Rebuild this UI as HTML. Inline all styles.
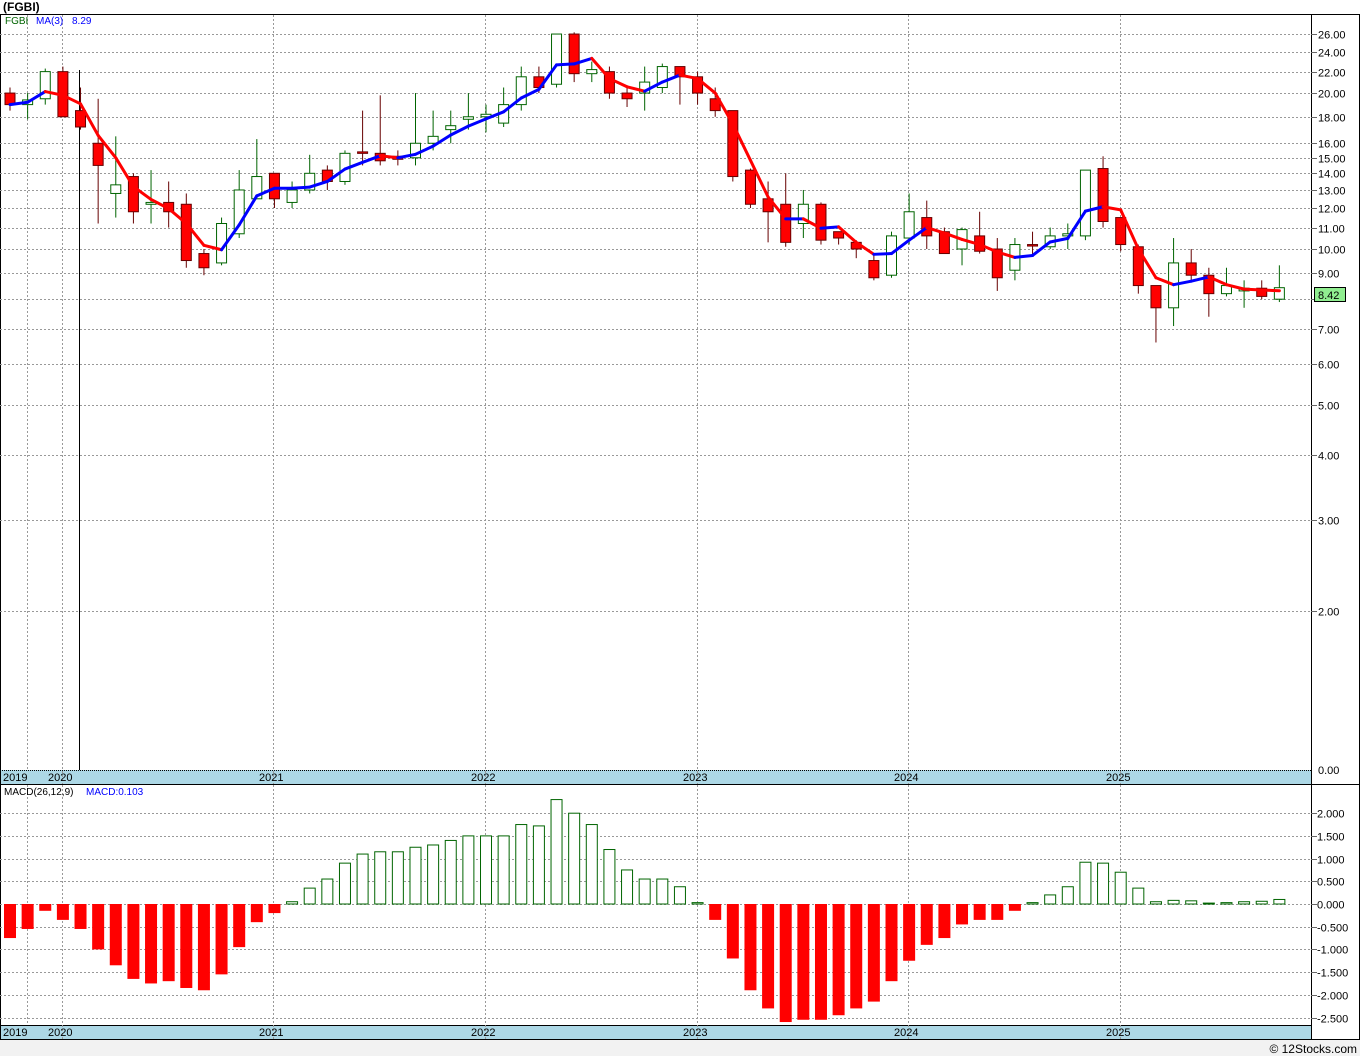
<!DOCTYPE html>
<html><head><meta charset="utf-8"><style>
body{margin:0;background:#fff;width:1360px;height:1056px;overflow:hidden;font-family:"Liberation Sans",sans-serif}
svg text{font-family:"Liberation Sans",sans-serif}
</style></head><body>
<svg id="s" width="1360" height="1056" xmlns="http://www.w3.org/2000/svg"></svg>
<script>
const D=[[20,20.5,18.5,19],[19,20,17.8,19.4],[19.5,22.3,19,22],[22,22.5,18,18],[18.5,20.5,17,17.2],[16,19.5,11.2,14.5],[12.8,16.5,11.5,13.3],[13.8,14,11.2,11.8],[12.2,14.2,11.2,12.3],[12.3,13.5,11,11.8],[12.2,12.8,9.2,9.5],[9.8,10,8.9,9.2],[9.4,11.5,9.3,11.2],[10.7,14.2,10.5,13],[12.5,16.3,12.5,13.8],[14,14,12,12.5],[12.3,13.5,12,13],[13,15.2,12.8,14],[14.2,14.5,13,13.5],[13.5,15.5,13.3,15.3],[15.4,18.5,14.5,15.3],[15.3,19.8,14.5,14.8],[15.1,15.5,14.5,14.9],[15,20,14.5,16],[16,18.5,15.5,16.5],[17,18.5,16,17.3],[17.8,20,17,18],[18,19,16.8,18.2],[17.5,20.5,17.2,19],[19,22.5,18.5,21.5],[21.5,22.5,20,20.5],[20.8,26,20.5,26],[26,26.2,21,21.8],[21.8,23,21,22.2],[22,22.5,19.5,20],[20,20.5,18.8,19.5],[20,22.5,18.5,21],[20.5,22.8,20,22.5],[22.5,22.5,19,21.5],[21.5,22,19,20],[19.5,20.5,18,18.5],[18.5,18.5,13.5,13.8],[14.2,14.3,12,12.2],[12.5,13.5,10.3,11.8],[12.2,14,10.1,10.3],[11.2,13,10.5,12.2],[12.2,12.3,10.2,10.4],[10.8,10.8,10.2,10.5],[10.3,10.4,9.6,10],[9.5,9.8,8.7,8.8],[8.9,10.8,8.8,10.6],[10.5,12.8,10.2,11.8],[11.5,12.4,10,10.6],[10.8,11,9.8,9.8],[10,11,9.3,10.9],[10.6,11.8,9.8,9.9],[10,10.5,8.3,8.8],[9.1,10.5,8.7,10.2],[10.2,10.8,9.7,10.15],[10.1,11,10,10.6],[10.6,11.2,10,10.7],[10.6,14.2,10.4,14.2],[14.3,15.1,11,11.3],[11.5,11.5,9.9,10.2],[10.1,10.2,8.2,8.5],[8.5,8.5,6.6,7.7],[7.7,10.5,7.1,9.4],[9.4,10,8.7,8.9],[8.9,9.2,7.4,8.2],[8.2,9.2,8.1,8.5],[8.3,8.7,7.7,8.4],[8.4,8.7,8,8.1],[8.0,9.3,7.9,8.42]];
const M=[-.75,-.55,-.15,-.35,-.55,-1,-1.35,-1.65,-1.75,-1.7,-1.85,-1.9,-1.55,-.95,-.4,-.2,.05,.35,.55,.9,1.1,1.15,1.15,1.25,1.3,1.4,1.5,1.5,1.5,1.75,1.72,2.3,2,1.75,1.2,.75,.55,.55,.38,.03,-.35,-1.2,-1.9,-2.3,-2.6,-2.55,-2.55,-2.45,-2.3,-2.15,-1.7,-1.25,-.9,-.75,-.45,-.35,-.35,-.15,.03,.2,.38,.92,.9,.7,.35,.05,.08,.07,.02,.03,.05,.06,.1];
const Y=p=>249-518*Math.log10(p/10), MY=v=>904-45.4*v, X=i=>10+17.63*i;
let h='';
h+=`<text x="3" y="11" font-size="12" font-weight="bold">(FGBI)</text>`;
h+=`<rect x="0.5" y="14.5" width="1359" height="1025" fill="#fff" stroke="#000"/>`;
h+=`<rect x="0" y="1040" width="1360" height="16" fill="#f2f2f2"/>`;
h+=`<text x="1357" y="1053" font-size="12" text-anchor="end" fill="#000">© 12Stocks.com</text>`;
h+=`<rect x="1" y="770" width="1310" height="14" fill="#add8e6"/><rect x="1" y="1025" width="1310" height="14" fill="#add8e6"/>`;
h+=`<line x1="0" y1="784.5" x2="1360" y2="784.5" stroke="#000"/><line x1="0" y1="770.5" x2="1311" y2="770.5" stroke="#000" stroke-dasharray="1,1"/><line x1="0" y1="1025.5" x2="1311" y2="1025.5" stroke="#000"/>`;
h+=`<line x1="1311.5" y1="14" x2="1311.5" y2="1040" stroke="#000"/>`;
const P=[26,24,22,20,18,16,15,14,13,12,11,10,9,8,7,6,5,4,3,2];
P.forEach(p=>{const y=Math.round(Y(p))+.5;h+=`<line x1="0" y1="${y}" x2="1311" y2="${y}" stroke="#999" stroke-dasharray="2,2"/><line x1="1311" y1="${y}" x2="1317" y2="${y}" stroke="#666"/>`+(p==8?'':`<text x="1318" y="${y+4}" font-size="11" fill="#000">${p.toFixed(2)}</text>`);});
h+=`<text x="1318" y="774" font-size="11">0.00</text>`;
[62,273,485,697,908,1120].forEach(x=>{h+=`<line x1="${x+.5}" y1="15" x2="${x+.5}" y2="784" stroke="#999" stroke-dasharray="2,2"/><line x1="${x+.5}" y1="785" x2="${x+.5}" y2="1039" stroke="#999" stroke-dasharray="2,2"/>`;});
h+=`<line x1="27.5" y1="15" x2="27.5" y2="770" stroke="#999" stroke-dasharray="2,2"/><line x1="27.5" y1="785" x2="27.5" y2="1025" stroke="#999" stroke-dasharray="2,2"/>`;
[[3,'2019'],[48,'2020'],[259,'2021'],[471,'2022'],[683,'2023'],[894,'2024'],[1106,'2025']].forEach(([x,t])=>{h+=`<text x="${x}" y="781" font-size="11">${t}</text><text x="${x}" y="1036" font-size="11">${t}</text>`;});
h+=`<line x1="79.5" y1="70" x2="79.5" y2="770" stroke="#000"/>`;
[2,1.5,1,.5,0,-.5,-1,-1.5,-2,-2.5].forEach(v=>{const y=Math.round(MY(v))+.5;h+=`<line x1="0" y1="${y}" x2="1311" y2="${y}" stroke="#999" stroke-dasharray="2,2"/><line x1="1311" y1="${y}" x2="1317" y2="${y}" stroke="#666"/><text x="1317" y="${y+4}" font-size="11">${(v<0?'':' ')+v.toFixed(3)}</text>`;});
D.forEach((d,i)=>{const [o,hi,lo,c]=d;const x=X(i);const up=c>=o;const col=up?'#006400':'#600';
h+=`<line x1="${x}" y1="${Y(hi)}" x2="${x}" y2="${Y(lo)}" stroke="${col}"/>`;
const t=Y(Math.max(o,c)),b=Y(Math.min(o,c));
h+=`<rect x="${x-5}" y="${t}" width="10" height="${Math.max(b-t,1.5)}" fill="${up?'#fff':'#f00'}" stroke="${up?'#006400':'#600'}"/>`;});
let ma=D.map((d,i)=>{let s=0,n=0;for(let k=Math.max(0,i-2);k<=i;k++){s+=D[k][3];n++}return s/n});
for(let i=1;i<ma.length;i++){h+=`<line x1="${X(i-1)}" y1="${Y(ma[i-1])}" x2="${X(i)}" y2="${Y(ma[i])}" stroke="${ma[i]>=ma[i-1]?'#00f':'#f00'}" stroke-width="3" stroke-linecap="round"/>`;}
M.forEach((v,i)=>{const x=X(i);const y0=MY(0),y1=MY(v);
if(v>=0)h+=`<rect x="${x-5.5}" y="${y1}" width="11" height="${Math.max(y0-y1,1)}" fill="#fff" stroke="#006400"/>`;
else h+=`<rect x="${x-6}" y="${y0}" width="12" height="${y1-y0}" fill="#f00"/>`;});
h+=`<text x="5" y="24" font-size="10" fill="#006400">FGBI</text><text x="36" y="24" font-size="10" fill="#00f">MA(3)</text><text x="72" y="24" font-size="10" fill="#00f">8.29</text>`;
h+=`<text x="4" y="795" font-size="10" fill="#000">MACD(26,12,9)</text><text x="86" y="795" font-size="10" fill="#00f">MACD:0.103</text>`;
h+=`<rect x="1314.5" y="287.5" width="31" height="14" fill="#90ee90" stroke="#000"/><text x="1318" y="299" font-size="11">8.42</text>`;
document.getElementById('s').innerHTML=h;
</script>
</body></html>
